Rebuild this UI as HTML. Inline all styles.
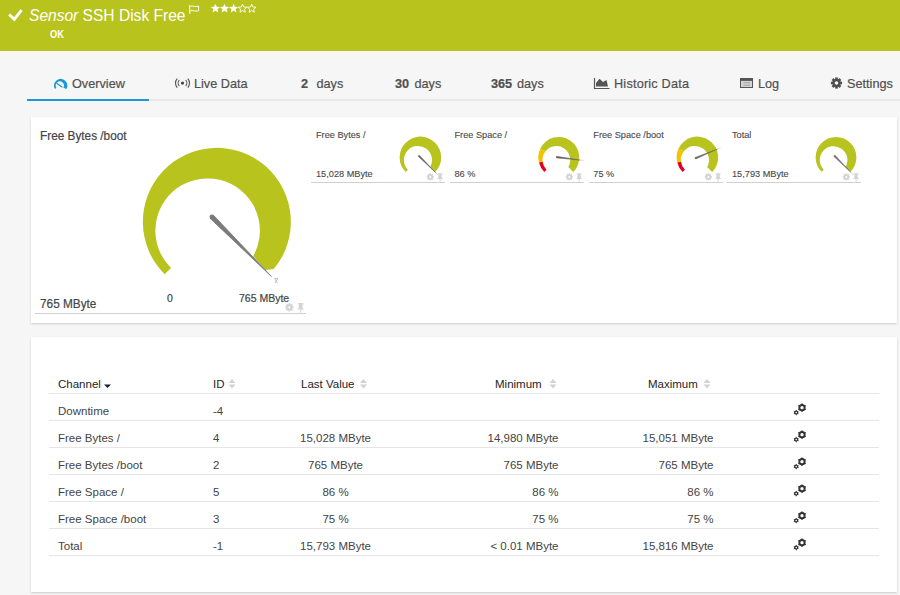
<!DOCTYPE html>
<html><head><meta charset="utf-8">
<style>
*{margin:0;padding:0;box-sizing:border-box}
html,body{width:900px;height:595px;overflow:hidden;background:#f6f6f6;font-family:"Liberation Sans",sans-serif;color:#4a4a4a}
.a{position:absolute;white-space:nowrap}
.tab,.bt{-webkit-text-stroke:0.2px currentColor}.sg{-webkit-text-stroke:0.12px currentColor}
#hdr{position:absolute;left:0;top:0;width:900px;height:51px;background:#b9c31d}
.tab{position:absolute;font-size:12.7px;color:#505050;line-height:14px;top:76.5px;white-space:nowrap}
.panel{position:absolute;background:#fff;box-shadow:0 1px 2px rgba(0,0,0,0.18)}
.th{position:absolute;font-size:11.5px;color:#1e1e28;line-height:14px;top:376.5px;white-space:nowrap}
.td{position:absolute;font-size:11.5px;color:#444;line-height:14px;white-space:nowrap}
.c1{left:58px}.c2{left:213px}.c3{left:235.5px;width:200px;text-align:center}.c4{right:341.5px;text-align:right}.c5{right:186.5px;text-align:right}
.rl{position:absolute;left:49px;width:830px;height:1px;background:#e6e6e6}
.sg{position:absolute;font-size:9.2px;color:#4a4a4a;line-height:12px;white-space:nowrap}
.ul{position:absolute;height:1px;background:#d0d0d0}
.srt{position:absolute;width:8px;height:10px}
</style></head><body>
<div id="hdr"></div>
<svg class="a" style="left:0;top:0" width="900" height="51">
  <path d="M9.2 14.5 L14.3 19.4 L21.5 10.2" fill="none" stroke="#fff" stroke-width="2.9"/>
  <path d="M189.7 5 V13.8" stroke="#fff" stroke-width="1.1"/><path d="M190.5 6.2 C193 5.4 195 7.2 198.6 6.2 V10.8 C195 11.8 193 10 190.5 10.8" fill="none" stroke="#fff" stroke-width="1"/>
</svg>
<div class="a" style="left:29px;top:5.5px;font-size:17px;line-height:20px;color:#fff;transform:scaleX(0.915);transform-origin:0 0"><i>Sensor</i> SSH Disk Free</div>
<div class="a" style="left:50px;top:29px;font-size:10px;line-height:12px;color:#fff;font-weight:bold;transform:scaleX(0.92);transform-origin:0 0">OK</div>
<svg class="a" style="left:0;top:0" width="300" height="20"><polygon points="215.40,3.70 216.69,6.82 220.06,7.09 217.49,9.28 218.28,12.56 215.40,10.80 212.52,12.56 213.31,9.28 210.74,7.09 214.11,6.82" fill="#fff"/><polygon points="224.50,3.70 225.79,6.82 229.16,7.09 226.59,9.28 227.38,12.56 224.50,10.80 221.62,12.56 222.41,9.28 219.84,7.09 223.21,6.82" fill="#fff"/><polygon points="233.60,3.70 234.89,6.82 238.26,7.09 235.69,9.28 236.48,12.56 233.60,10.80 230.72,12.56 231.51,9.28 228.94,7.09 232.31,6.82" fill="#fff"/><polygon points="242.60,4.10 243.78,6.98 246.88,7.21 244.50,9.22 245.25,12.24 242.60,10.60 239.95,12.24 240.70,9.22 238.32,7.21 241.42,6.98" fill="none" stroke="#fff" stroke-width="0.9"/><polygon points="251.70,4.10 252.88,6.98 255.98,7.21 253.60,9.22 254.35,12.24 251.70,10.60 249.05,12.24 249.80,9.22 247.42,7.21 250.52,6.98" fill="none" stroke="#fff" stroke-width="0.9"/></svg>

<div class="a" style="left:27px;top:99px;width:122px;height:2px;background:#1d9ad6"></div>
<div class="a" style="left:149px;top:99px;width:751px;height:2px;background:#e9e9e9"></div>
<svg class="a" style="left:0;top:0" width="900" height="100">
  <path transform="translate(0 0.5)" d="M55.04 88.5 A6.6 6.6 0 1 1 66.36 88.5 L63.36 87.21 A4.1 4.1 0 1 0 56.34 87.21 Z" fill="#1d9ad6"/>
  <path transform="translate(0 0.5)" d="M57 83.1 L62 86.5" stroke="#1d9ad6" stroke-width="1.2" stroke-linecap="round"/>
  <path d="M594.5 78 V88.5 H609.5" fill="none" stroke="#555" stroke-width="1.2"/>
  <path d="M596 86.5 V83 L599.5 78.8 L603 82 L606.5 80 L608 86.5 Z" fill="#555"/>
  <rect x="740.5" y="78.5" width="12" height="9" fill="#d4d4d4" stroke="#555" stroke-width="1"/>
  <rect x="740.5" y="78.5" width="12" height="2.4" fill="#555"/>
  <path d="M743.5 82.8 H750 M743.5 85.2 H750" stroke="#9a9a9a" stroke-width="0.9"/>
  <g transform="translate(836.5 83)">
    <circle r="4.2" fill="#505050"/>
    <rect x="-1.3" y="-5.6" width="2.6" height="11.2" fill="#505050"/>
    <rect x="-5.6" y="-1.3" width="11.2" height="2.6" fill="#505050"/>
    <rect x="-1.3" y="-5.6" width="2.6" height="11.2" fill="#505050" transform="rotate(45)"/>
    <rect x="-1.3" y="-5.6" width="2.6" height="11.2" fill="#505050" transform="rotate(-45)"/>
    <circle r="1.8" fill="#f6f6f6"/>
  </g>
</svg>
<div class="tab" style="left:72px">Overview</div>
<svg class="a" style="left:0;top:0" width="300" height="100"><g fill="none" stroke="#555" stroke-width="1.1"><path d="M179.3 80.2 A4.2 4.2 0 0 0 179.3 86"/><path d="M185.7 80.2 A4.2 4.2 0 0 1 185.7 86"/><path d="M177.2 78.6 A6.8 6.8 0 0 0 177.2 87.6"/><path d="M187.8 78.6 A6.8 6.8 0 0 1 187.8 87.6"/></g><circle cx="182.5" cy="83.1" r="1.6" fill="#444"/></svg>
<div class="tab" style="left:194px">Live Data</div>
<div class="tab" style="left:301px"><b>2</b></div><div class="tab" style="left:316.5px">days</div>
<div class="tab" style="left:395px"><b>30</b></div><div class="tab" style="left:414.5px">days</div>
<div class="tab" style="left:491px"><b>365</b></div><div class="tab" style="left:517px">days</div>
<div class="tab" style="left:614px;letter-spacing:0.2px">Historic Data</div>
<div class="tab" style="left:758px">Log</div>
<div class="tab" style="left:847px">Settings</div>

<div class="panel" style="left:31px;top:117px;width:866px;height:206px"></div>
<div class="a bt" style="left:40px;top:128.5px;font-size:12.5px;line-height:14px;color:#444;transform:scaleX(0.944);transform-origin:0 0">Free Bytes /boot</div>
<div class="a bt" style="left:40px;top:296.5px;font-size:12.5px;line-height:14px;color:#444;transform:scaleX(0.944);transform-origin:0 0">765 MByte</div>
<div class="ul" style="left:35px;top:313px;width:271px"></div>
<div class="a bt" style="left:167px;top:292px;font-size:10.5px;line-height:12px;color:#444">0</div>
<div class="a bt" style="left:239px;top:292px;font-size:10.5px;line-height:12px;color:#444">765 MByte</div>

<div class="sg" style="left:316px;top:129px">Free Bytes /</div>
<div class="sg" style="left:316px;top:168px">15,028 MByte</div>
<div class="ul" style="left:311px;top:182px;width:134px"></div>
<div class="sg" style="left:454.5px;top:129px">Free Space /</div>
<div class="sg" style="left:454.5px;top:168px">86 %</div>
<div class="ul" style="left:450px;top:182px;width:134px"></div>
<div class="sg" style="left:593.3px;top:129px">Free Space /boot</div>
<div class="sg" style="left:593.3px;top:168px">75 %</div>
<div class="ul" style="left:589px;top:182px;width:134px"></div>
<div class="sg" style="left:732px;top:129px">Total</div>
<div class="sg" style="left:732px;top:168px">15,793 MByte</div>
<div class="ul" style="left:727px;top:182px;width:134px"></div>

<svg class="a" style="left:0;top:0" width="900" height="330">
<path d="M164.67 274.33 A74 74 0 1 1 273.8 269.1 L265.5 269.9 L253.2 256.2 A52.25 52.25 0 1 0 171.05 267.95 Z" fill="#b9c31d"/>
<path d="M210.21 218.46 L271.45 276.45 L213.46 215.21 Z" fill="#7a7a7a" stroke="#7a7a7a" stroke-width="0.80" stroke-linejoin="round"/>
<circle cx="211.84" cy="216.84" r="2.30" fill="#7a7a7a"/><path d="M274.5 278.5 h3.5 M275 279 l2.5 4 M277.5 279 l-2.5 4" stroke="#a8b4c0" stroke-width="0.8" fill="none"/>
<path d="M405.69 172.11 A20.80 20.80 0 1 1 435.11 172.11 L430.08 167.08 A14.05 14.05 0 1 0 407.93 169.87 Z" fill="#b9c31d"/>
<path d="M418.38 156.51 L435.70 172.70 L419.51 155.38 Z" fill="#666" stroke="#666" stroke-width="0.50" stroke-linejoin="round"/>
<circle cx="418.95" cy="155.95" r="0.80" fill="#666"/>
<path d="M435.70 172.70 L438.18 175.18" stroke="#c8ccd0" stroke-width="0.7"/>
<path d="M544.30 171.90 A20.50 20.50 0 0 1 538.93 162.44 L542.61 161.50 A13.85 13.85 0 0 0 546.51 169.69 Z" fill="#e3001b"/>
<path d="M538.93 162.44 A20.50 20.50 0 0 1 540.25 148.67 L545.64 151.21 A13.85 13.85 0 0 0 542.61 161.50 Z" fill="#f3c300"/>
<path d="M540.25 148.67 A20.50 20.50 0 1 1 573.30 171.90 L568.34 166.94 A13.85 13.85 0 0 0 545.64 151.21 Z" fill="#b9c31d"/>
<path d="M556.69 157.94 L579.96 160.07 L556.89 156.35 Z" fill="#666" stroke="#666" stroke-width="0.50" stroke-linejoin="round"/>
<circle cx="556.79" cy="157.15" r="0.80" fill="#666"/>
<path d="M579.96 160.07 L583.44 160.51" stroke="#c8ccd0" stroke-width="0.7"/>
<path d="M682.69 172.11 A20.80 20.80 0 0 1 677.24 162.51 L680.97 161.56 A14.05 14.05 0 0 0 684.93 169.87 Z" fill="#e3001b"/>
<path d="M677.24 162.51 A20.80 20.80 0 0 1 678.58 148.54 L684.05 151.12 A14.05 14.05 0 0 0 680.97 161.56 Z" fill="#f3c300"/>
<path d="M678.58 148.54 A20.80 20.80 0 1 1 712.11 172.11 L707.08 167.08 A14.05 14.05 0 0 0 684.05 151.12 Z" fill="#b9c31d"/>
<path d="M695.81 158.92 L717.40 149.12 L695.20 157.45 Z" fill="#666" stroke="#666" stroke-width="0.50" stroke-linejoin="round"/>
<circle cx="695.50" cy="158.19" r="0.80" fill="#666"/>
<path d="M717.40 149.12 L720.63 147.78" stroke="#c8ccd0" stroke-width="0.7"/>
<path d="M821.58 171.82 A20.40 20.40 0 1 1 850.42 171.82 L845.49 166.89 A13.78 13.78 0 1 0 823.77 169.63 Z" fill="#b9c31d"/>
<path d="M834.01 156.54 L851.01 172.41 L835.14 155.41 Z" fill="#666" stroke="#666" stroke-width="0.50" stroke-linejoin="round"/>
<circle cx="834.58" cy="155.98" r="0.80" fill="#666"/>
<path d="M851.01 172.41 L853.48 174.88" stroke="#c8ccd0" stroke-width="0.7"/><g transform="translate(289.40 307.40) scale(1.05)" fill="#d3d3d3"><circle r="2.9"/><rect x="-0.85" y="-3.9" width="1.7" height="7.8" transform="rotate(0)"/><rect x="-0.85" y="-3.9" width="1.7" height="7.8" transform="rotate(45)"/><rect x="-0.85" y="-3.9" width="1.7" height="7.8" transform="rotate(90)"/><rect x="-0.85" y="-3.9" width="1.7" height="7.8" transform="rotate(135)"/><circle r="1.1" fill="#fff"/></g><g transform="translate(300.70 307.30) scale(1.05)" fill="#d3d3d3"><rect x="-2.6" y="-4" width="5.2" height="1.4"/><path d="M-1.6 -3 H1.6 L1.9 0.8 L3.3 2.2 H-3.3 L-1.9 0.8 Z"/><rect x="-0.5" y="2" width="1" height="3"/></g><g transform="translate(430.30 176.90) scale(0.92)" fill="#d3d3d3"><circle r="2.9"/><rect x="-0.85" y="-3.9" width="1.7" height="7.8" transform="rotate(0)"/><rect x="-0.85" y="-3.9" width="1.7" height="7.8" transform="rotate(45)"/><rect x="-0.85" y="-3.9" width="1.7" height="7.8" transform="rotate(90)"/><rect x="-0.85" y="-3.9" width="1.7" height="7.8" transform="rotate(135)"/><circle r="1.1" fill="#fff"/></g><g transform="translate(440.10 177.00) scale(0.92)" fill="#d3d3d3"><rect x="-2.6" y="-4" width="5.2" height="1.4"/><path d="M-1.6 -3 H1.6 L1.9 0.8 L3.3 2.2 H-3.3 L-1.9 0.8 Z"/><rect x="-0.5" y="2" width="1" height="3"/></g><g transform="translate(569.30 176.90) scale(0.92)" fill="#d3d3d3"><circle r="2.9"/><rect x="-0.85" y="-3.9" width="1.7" height="7.8" transform="rotate(0)"/><rect x="-0.85" y="-3.9" width="1.7" height="7.8" transform="rotate(45)"/><rect x="-0.85" y="-3.9" width="1.7" height="7.8" transform="rotate(90)"/><rect x="-0.85" y="-3.9" width="1.7" height="7.8" transform="rotate(135)"/><circle r="1.1" fill="#fff"/></g><g transform="translate(579.10 177.00) scale(0.92)" fill="#d3d3d3"><rect x="-2.6" y="-4" width="5.2" height="1.4"/><path d="M-1.6 -3 H1.6 L1.9 0.8 L3.3 2.2 H-3.3 L-1.9 0.8 Z"/><rect x="-0.5" y="2" width="1" height="3"/></g><g transform="translate(708.30 176.90) scale(0.92)" fill="#d3d3d3"><circle r="2.9"/><rect x="-0.85" y="-3.9" width="1.7" height="7.8" transform="rotate(0)"/><rect x="-0.85" y="-3.9" width="1.7" height="7.8" transform="rotate(45)"/><rect x="-0.85" y="-3.9" width="1.7" height="7.8" transform="rotate(90)"/><rect x="-0.85" y="-3.9" width="1.7" height="7.8" transform="rotate(135)"/><circle r="1.1" fill="#fff"/></g><g transform="translate(718.10 177.00) scale(0.92)" fill="#d3d3d3"><rect x="-2.6" y="-4" width="5.2" height="1.4"/><path d="M-1.6 -3 H1.6 L1.9 0.8 L3.3 2.2 H-3.3 L-1.9 0.8 Z"/><rect x="-0.5" y="2" width="1" height="3"/></g><g transform="translate(846.30 176.90) scale(0.92)" fill="#d3d3d3"><circle r="2.9"/><rect x="-0.85" y="-3.9" width="1.7" height="7.8" transform="rotate(0)"/><rect x="-0.85" y="-3.9" width="1.7" height="7.8" transform="rotate(45)"/><rect x="-0.85" y="-3.9" width="1.7" height="7.8" transform="rotate(90)"/><rect x="-0.85" y="-3.9" width="1.7" height="7.8" transform="rotate(135)"/><circle r="1.1" fill="#fff"/></g><g transform="translate(856.10 177.00) scale(0.92)" fill="#d3d3d3"><rect x="-2.6" y="-4" width="5.2" height="1.4"/><path d="M-1.6 -3 H1.6 L1.9 0.8 L3.3 2.2 H-3.3 L-1.9 0.8 Z"/><rect x="-0.5" y="2" width="1" height="3"/></g>
</svg>

<div class="panel" style="left:31px;top:337px;width:866px;height:255px"></div>
<div class="th" style="left:58px">Channel</div>
<div class="th" style="left:213px">ID</div>
<div class="th" style="left:301px">Last Value</div>
<div class="th" style="left:495px">Minimum</div>
<div class="th" style="left:648px">Maximum</div>
<svg class="a" style="left:0;top:370px" width="900" height="30">
  <path d="M104 14.5 h7 l-3.5 3.5 z" fill="#1e1e28"/>
  <g fill="#d2d2d2">
    <path d="M228.5 13 l3.5 -4 l3.5 4 z M228.5 14.5 l3.5 4 l3.5 -4 z"/>
    <path d="M360 13 l3.5 -4 l3.5 4 z M360 14.5 l3.5 4 l3.5 -4 z"/>
    <path d="M549.5 13 l3.5 -4 l3.5 4 z M549.5 14.5 l3.5 4 l3.5 -4 z"/>
    <path d="M703.5 13 l3.5 -4 l3.5 4 z M703.5 14.5 l3.5 4 l3.5 -4 z"/>
  </g>
</svg>
<div class="rl" style="top:393px"></div>
<div class="rl" style="top:420px"></div>
<div class="rl" style="top:447px"></div>
<div class="rl" style="top:474px"></div>
<div class="rl" style="top:501px"></div>
<div class="rl" style="top:528px"></div>
<div class="rl" style="top:555px"></div>

<div class="td c1" style="top:403.5px">Downtime</div>
<div class="td c2" style="top:403.5px">-4</div>
<svg class="a" style="left:792px;top:403px" width="16" height="16"><g fill="#333"><circle cx="10" cy="4.7" r="3.6"/><rect x="9.4" y="0.4" width="1.2" height="8.6" transform="rotate(0 10 4.7)"/><rect x="9.4" y="0.4" width="1.2" height="8.6" transform="rotate(60 10 4.7)"/><rect x="9.4" y="0.4" width="1.2" height="8.6" transform="rotate(120 10 4.7)"/><circle cx="4.2" cy="9.6" r="2.1"/><rect x="3.8" y="6.9" width="0.8" height="5.4" transform="rotate(0 4.2 9.6)"/><rect x="3.8" y="6.9" width="0.8" height="5.4" transform="rotate(60 4.2 9.6)"/><rect x="3.8" y="6.9" width="0.8" height="5.4" transform="rotate(120 4.2 9.6)"/></g><circle cx="10" cy="4.7" r="1.65" fill="#fff"/><circle cx="4.2" cy="9.6" r="0.8" fill="#fff"/></svg>
<div class="td c1" style="top:430.5px">Free Bytes /</div>
<div class="td c2" style="top:430.5px">4</div>
<div class="td c3" style="top:430.5px">15,028 MByte</div>
<div class="td c4" style="top:430.5px">14,980 MByte</div>
<div class="td c5" style="top:430.5px">15,051 MByte</div>
<svg class="a" style="left:792px;top:430px" width="16" height="16"><g fill="#333"><circle cx="10" cy="4.7" r="3.6"/><rect x="9.4" y="0.4" width="1.2" height="8.6" transform="rotate(0 10 4.7)"/><rect x="9.4" y="0.4" width="1.2" height="8.6" transform="rotate(60 10 4.7)"/><rect x="9.4" y="0.4" width="1.2" height="8.6" transform="rotate(120 10 4.7)"/><circle cx="4.2" cy="9.6" r="2.1"/><rect x="3.8" y="6.9" width="0.8" height="5.4" transform="rotate(0 4.2 9.6)"/><rect x="3.8" y="6.9" width="0.8" height="5.4" transform="rotate(60 4.2 9.6)"/><rect x="3.8" y="6.9" width="0.8" height="5.4" transform="rotate(120 4.2 9.6)"/></g><circle cx="10" cy="4.7" r="1.65" fill="#fff"/><circle cx="4.2" cy="9.6" r="0.8" fill="#fff"/></svg>
<div class="td c1" style="top:457.5px">Free Bytes /boot</div>
<div class="td c2" style="top:457.5px">2</div>
<div class="td c3" style="top:457.5px">765 MByte</div>
<div class="td c4" style="top:457.5px">765 MByte</div>
<div class="td c5" style="top:457.5px">765 MByte</div>
<svg class="a" style="left:792px;top:457px" width="16" height="16"><g fill="#333"><circle cx="10" cy="4.7" r="3.6"/><rect x="9.4" y="0.4" width="1.2" height="8.6" transform="rotate(0 10 4.7)"/><rect x="9.4" y="0.4" width="1.2" height="8.6" transform="rotate(60 10 4.7)"/><rect x="9.4" y="0.4" width="1.2" height="8.6" transform="rotate(120 10 4.7)"/><circle cx="4.2" cy="9.6" r="2.1"/><rect x="3.8" y="6.9" width="0.8" height="5.4" transform="rotate(0 4.2 9.6)"/><rect x="3.8" y="6.9" width="0.8" height="5.4" transform="rotate(60 4.2 9.6)"/><rect x="3.8" y="6.9" width="0.8" height="5.4" transform="rotate(120 4.2 9.6)"/></g><circle cx="10" cy="4.7" r="1.65" fill="#fff"/><circle cx="4.2" cy="9.6" r="0.8" fill="#fff"/></svg>
<div class="td c1" style="top:484.5px">Free Space /</div>
<div class="td c2" style="top:484.5px">5</div>
<div class="td c3" style="top:484.5px">86 %</div>
<div class="td c4" style="top:484.5px">86 %</div>
<div class="td c5" style="top:484.5px">86 %</div>
<svg class="a" style="left:792px;top:484px" width="16" height="16"><g fill="#333"><circle cx="10" cy="4.7" r="3.6"/><rect x="9.4" y="0.4" width="1.2" height="8.6" transform="rotate(0 10 4.7)"/><rect x="9.4" y="0.4" width="1.2" height="8.6" transform="rotate(60 10 4.7)"/><rect x="9.4" y="0.4" width="1.2" height="8.6" transform="rotate(120 10 4.7)"/><circle cx="4.2" cy="9.6" r="2.1"/><rect x="3.8" y="6.9" width="0.8" height="5.4" transform="rotate(0 4.2 9.6)"/><rect x="3.8" y="6.9" width="0.8" height="5.4" transform="rotate(60 4.2 9.6)"/><rect x="3.8" y="6.9" width="0.8" height="5.4" transform="rotate(120 4.2 9.6)"/></g><circle cx="10" cy="4.7" r="1.65" fill="#fff"/><circle cx="4.2" cy="9.6" r="0.8" fill="#fff"/></svg>
<div class="td c1" style="top:511.5px">Free Space /boot</div>
<div class="td c2" style="top:511.5px">3</div>
<div class="td c3" style="top:511.5px">75 %</div>
<div class="td c4" style="top:511.5px">75 %</div>
<div class="td c5" style="top:511.5px">75 %</div>
<svg class="a" style="left:792px;top:511px" width="16" height="16"><g fill="#333"><circle cx="10" cy="4.7" r="3.6"/><rect x="9.4" y="0.4" width="1.2" height="8.6" transform="rotate(0 10 4.7)"/><rect x="9.4" y="0.4" width="1.2" height="8.6" transform="rotate(60 10 4.7)"/><rect x="9.4" y="0.4" width="1.2" height="8.6" transform="rotate(120 10 4.7)"/><circle cx="4.2" cy="9.6" r="2.1"/><rect x="3.8" y="6.9" width="0.8" height="5.4" transform="rotate(0 4.2 9.6)"/><rect x="3.8" y="6.9" width="0.8" height="5.4" transform="rotate(60 4.2 9.6)"/><rect x="3.8" y="6.9" width="0.8" height="5.4" transform="rotate(120 4.2 9.6)"/></g><circle cx="10" cy="4.7" r="1.65" fill="#fff"/><circle cx="4.2" cy="9.6" r="0.8" fill="#fff"/></svg>
<div class="td c1" style="top:538.5px">Total</div>
<div class="td c2" style="top:538.5px">-1</div>
<div class="td c3" style="top:538.5px">15,793 MByte</div>
<div class="td c4" style="top:538.5px">&lt; 0.01 MByte</div>
<div class="td c5" style="top:538.5px">15,816 MByte</div>
<svg class="a" style="left:792px;top:538px" width="16" height="16"><g fill="#333"><circle cx="10" cy="4.7" r="3.6"/><rect x="9.4" y="0.4" width="1.2" height="8.6" transform="rotate(0 10 4.7)"/><rect x="9.4" y="0.4" width="1.2" height="8.6" transform="rotate(60 10 4.7)"/><rect x="9.4" y="0.4" width="1.2" height="8.6" transform="rotate(120 10 4.7)"/><circle cx="4.2" cy="9.6" r="2.1"/><rect x="3.8" y="6.9" width="0.8" height="5.4" transform="rotate(0 4.2 9.6)"/><rect x="3.8" y="6.9" width="0.8" height="5.4" transform="rotate(60 4.2 9.6)"/><rect x="3.8" y="6.9" width="0.8" height="5.4" transform="rotate(120 4.2 9.6)"/></g><circle cx="10" cy="4.7" r="1.65" fill="#fff"/><circle cx="4.2" cy="9.6" r="0.8" fill="#fff"/></svg>

</body></html>
